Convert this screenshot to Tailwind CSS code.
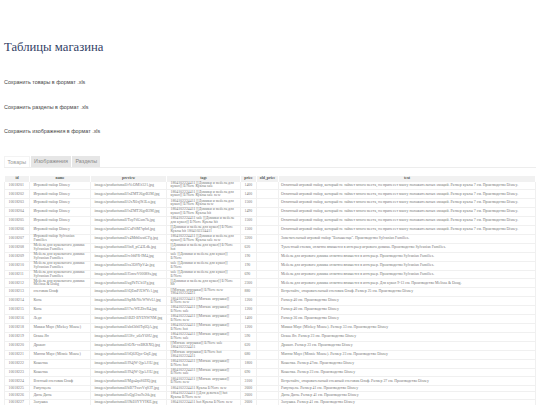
<!DOCTYPE html>
<html lang="ru">
<head>
<meta charset="UTF-8">
<title>Таблицы магазина</title>
<script src="https://cdn.jsdelivr.net/npm/@tailwindcss/browser@4"></script>
</head>
<body class="bg-white overflow-hidden h-[405px] font-['Liberation_Sans',sans-serif]">
<div class="px-1">
  <h1 class="pt-[39px] text-[12.7px] leading-[16px] font-normal text-[#333f66] font-['Liberation_Serif',serif]">Таблицы магазина</h1>
  <div class="mt-[24px] flex flex-col gap-[18.5px] text-[5.4px] leading-[6px] text-[#444]">
    <a>Сохранить товары в формат .xls</a>
    <a>Сохранить разделы в формат .xls</a>
    <a>Сохранить изображения в формат .xls</a>
  </div>
  <div class="mt-[22px] flex gap-[1.5px] border-b border-[#ededed] text-[5.4px] leading-[10px] text-[#999]">
    <span class="px-[2.5px] bg-white border border-b-0 border-[#f3f3f3]">Товары</span>
    <span class="px-[3px] bg-[#e6e6e6] text-[#888]">Изображения</span>
    <span class="px-[3px] bg-[#e6e6e6] text-[#888]">Разделы</span>
  </div>
  <table class="mt-[8px] w-[532px] table-fixed border-collapse text-[3.85px] leading-[3.7px] text-[#777] font-['Liberation_Serif',serif] [&_th]:bg-[#f1f1f1] [&_th]:text-[#555] [&_th]:font-bold [&_th]:h-[5.5px] [&_th]:border-x [&_th]:border-white [&_td]:border-b [&_td]:border-x [&_td]:border-[#f0f0f0] [&_td]:px-[3.5px] [&_td]:py-[0.25px] [&_td]:align-middle [&_td:last-child]:pl-[2px]">
    <colgroup>
      <col class="w-[25px]"><col class="w-[61px]"><col class="w-[76px]"><col class="w-[74px]"><col class="w-[16px]"><col class="w-[22px]"><col>
    </colgroup>
    <thead>
      <tr><th>id</th><th>name</th><th>preview</th><th>tags</th><th>price</th><th>old_price</th><th>text</th></tr>
    </thead>
    <tbody>
      <tr><td>10018201</td><td>Игровой набор Disney</td><td>images/productsmall/rVeOM1f321.jpg</td><td>1804102224411 [[Домики и мебель для кукол]] Б/Noте Куклы sale</td><td>1400</td><td></td><td>Отличный игровой набор, который не займет много места, но принесет массу положительных эмоций. Размер куклы 7 см. Производство Disney.</td></tr>
      <tr><td>10018202</td><td>Игровой набор Disney</td><td>images/productsmall/lxZMT26grB3M.jpg</td><td>1804102224411 [[Домики и мебель для кукол]] Б/Noте Куклы sale new</td><td>1400</td><td></td><td>Отличный игровой набор, который не займет много места, но принесет массу положительных эмоций. Размер куклы 7 см. Производство Disney.</td></tr>
      <tr><td>10018203</td><td>Игровой набор Disney</td><td>images/productsmall/i2xX6xj9f3Lo.jpg</td><td>1804102224411 [[Домики и мебель для кукол]] Б/Noте Куклы new</td><td>1500</td><td></td><td>Отличный игровой набор, который не займет много места, но принесет массу положительных эмоций. Размер куклы 7 см. Производство Disney.</td></tr>
      <tr><td>10018204</td><td>Игровой набор Disney</td><td>images/productsmall/lxZMT26grB3M.jpg</td><td>1804102224411 [[Домики и мебель для кукол]] Б/Noте Куклы hit</td><td>1490</td><td></td><td>Отличный игровой набор, который не займет много места, но принесет массу положительных эмоций. Размер куклы 7 см. Производство Disney.</td></tr>
      <tr><td>10018205</td><td>Игровой набор Disney</td><td>images/productsmall/ToyFtlGsm7k.jpg</td><td>1804102224411 sale [[Домики и мебель для кукол]] Б/Noте Куклы hit</td><td>1500</td><td></td><td>Отличный игровой набор, который не займет много места, но принесет массу положительных эмоций. Размер куклы 7 см. Производство Disney.</td></tr>
      <tr><td>10018206</td><td>Игровой набор Disney</td><td>images/productsmall/CuPfiM7qrbd.jpg</td><td>[[Домики и мебель для кукол]] Б/Noте Куклы hit 1804102224411</td><td>1500</td><td></td><td>Отличный игровой набор, который не займет много места, но принесет массу положительных эмоций. Размер куклы 7 см. Производство Disney.</td></tr>
      <tr><td>10018207</td><td>Игровой набор Sylvanian Families</td><td>images/productsmall/v4Mdt6watCFg.jpg</td><td>1804102224411 [[Домики и мебель для кукол]] Б/Noте Куклы sale new</td><td>3200</td><td></td><td>Замечательный игровой набор "Большенца". Производство Sylvanian Families.</td></tr>
      <tr><td>10018208</td><td>Мебель для кукольного домика Sylvanian Families</td><td>images/productsmall/lin8_pC43Ldk.jpg</td><td>[[Домики и мебель для кукол]] Б/Noте hot</td><td>620</td><td></td><td>Туалетный столик, отлично впишется в интерьер игрового домика. Производство Sylvanian Families.</td></tr>
      <tr><td>10018209</td><td>Мебель для кукольного домика Sylvanian Families</td><td>images/productsmall/rvJdtPR-IM4.jpg</td><td>sale [[Домики и мебель для кукол]] Б/Noте</td><td>190</td><td></td><td>Мебель для игрового домика отлично впишется в интерьер. Производство Sylvanian Families.</td></tr>
      <tr><td>10018210</td><td>Мебель для кукольного домика Sylvanian Families</td><td>images/productsmall/ca3DSYpV4c.jpg</td><td>sale [[Домики и мебель для кукол]] Б/Noте</td><td>190</td><td></td><td>Мебель для игрового домика отлично впишется в интерьер. Производство Sylvanian Families.</td></tr>
      <tr><td>10018211</td><td>Мебель для кукольного домика Sylvanian Families</td><td>images/productsmall/J5mwV0008Ss.jpg</td><td>sale [[Домики и мебель для кукол]] Б/Noте</td><td>690</td><td></td><td>Мебель для игрового домика отлично впишется в интерьер. Производство Sylvanian Families.</td></tr>
      <tr><td>10018212</td><td>Мебель для кукольного домика Melissa &amp; Doug</td><td>images/productsmall/ugPbTCb1Pg.jpg</td><td>[[Домики и мебель для кукол]] Б/Noте hit</td><td>2300</td><td></td><td>Мебель для игрового домика отлично впишется в интерьер. Для кукол 9-13 см. Производство Melissa &amp; Doug.</td></tr>
      <tr><td>10018213</td><td>снеговик Олаф</td><td>images/productsmall/iQEmPJLWYe1.jpg</td><td>[[Мягкие игрушки]] Б/Noте new 1804102224411</td><td>880</td><td></td><td>Встречайте, очаровательный снеговик Олаф. Размер 25 см. Производство Disney</td></tr>
      <tr><td>10018214</td><td>Конь</td><td>images/productsmall/hpMcNfeWWvLl.jpg</td><td>1804102224411 [[Мягкие игрушки]] Б/Noте new</td><td>1200</td><td></td><td>Размер 40 см. Производство Disney</td></tr>
      <tr><td>10018215</td><td>Конь</td><td>images/productsmall/l7xeWEZhvR4.jpg</td><td>1804102224411 [[Мягкие игрушки]] Б/Noте sale</td><td>1200</td><td></td><td>Размер 40 см. Производство Disney</td></tr>
      <tr><td>10018216</td><td>Ледя</td><td>images/productsmall/iBZI-BYENWNM.jpg</td><td>1804102224411 [[Мягкие игрушки]] Б/Noте new</td><td>1400</td><td></td><td>Размер 36 см. Производство Disney</td></tr>
      <tr><td>10018218</td><td>Микки Маус (Mickey Mouse)</td><td>images/productsmall/abd3th0Tq6QA.jpg</td><td>1804102224411 [[Мягкие игрушки]] Б/Noте hot</td><td>1200</td><td></td><td>Микки Маус (Mickey Mouse). Размер 33 см. Производство Disney</td></tr>
      <tr><td>10018219</td><td>Оскаь Ян</td><td>images/productsmall/l3Sv_u6zY6SU.jpg</td><td>1804102224411 [[Мягкие игрушки]] Б/Noте sale</td><td>590</td><td></td><td>Оскаь Ян. Размер 23 см. Производство Disney</td></tr>
      <tr><td>10018220</td><td>Дракон</td><td>images/productsmall/fOXr-vzBKRXQ.jpg</td><td>[[Мягкие игрушки]] Б/Noте sale 1804102224411</td><td>620</td><td></td><td>Дракон. Размер 23 см. Производство Disney</td></tr>
      <tr><td>10018221</td><td>Минни Маус (Minnie Mouse)</td><td>images/productsmall/lfQ6JQyz-OqE.jpg</td><td>[[Мягкие игрушки]] Б/Noте hot 1804102224411</td><td>680</td><td></td><td>Минни Маус (Minnie Mouse). Размер 23 см. Производство Disney</td></tr>
      <tr><td>10018222</td><td>Кошечка</td><td>images/productsmall/J94jW-2jpAJ1U.jpg</td><td>1804102224411 [[Мягкие игрушки]] Б/Noте hot</td><td>1800</td><td></td><td>Кошечка. Размер 47см. Производство Disney</td></tr>
      <tr><td>10018223</td><td>Кошечка</td><td>images/productsmall/J94jW-2jpAJ1U.jpg</td><td>1804102224411 [[Мягкие игрушки]] Б/Noте sale</td><td>690</td><td></td><td>Кошечка. Размер 23 см. Производство Disney</td></tr>
      <tr><td>10018224</td><td>Взязный снеговик Олаф</td><td>images/productsmall/Mgo4qoS6HQ.jpg</td><td>1804102224411 [[Мягкие игрушки]] Б/Noте new</td><td>3100</td><td></td><td>Встречайте, очаровательный снежный снеговик Олаф. Размер 27 см. Производство Disney</td></tr>
      <tr><td>10018225</td><td>Рапунцель</td><td>images/productsmall/bB7TxuvVqS3T.jpg</td><td>1804102224411 Куклы Б/Noте new</td><td>2600</td><td></td><td>Рапунцель. Размер 41 см. Производство Disney</td></tr>
      <tr><td>10018226</td><td>Динь Динь</td><td>images/productsmall/oQgl3xo9z2tk.jpg</td><td>1804102224411 [[Для девочек]] hot Куклы Б/Noте new</td><td>2600</td><td></td><td>Динь Динь. Размер 41 см. Производство Disney</td></tr>
      <tr><td>10018227</td><td>Золушка</td><td>images/productsmall/l9kE0YYYIKE.jpg</td><td>1804102224411 hot Куклы Б/Noте new</td><td>2600</td><td></td><td>Золушка. Размер 41 см. Производство Disney</td></tr>
    </tbody>
  </table>
</div>
</body>
</html>
